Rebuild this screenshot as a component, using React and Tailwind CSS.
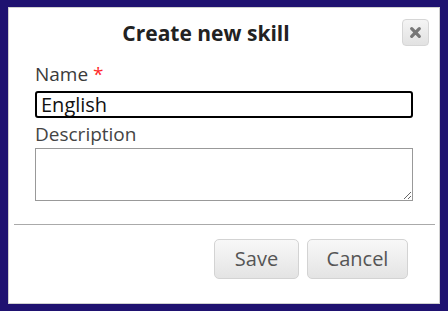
import React from "react";

export default function App() {
  return (
    <div className="w-[448px] h-[311px] bg-[#1f1270] pt-[7px] pl-[8px] pr-[8px] pb-[7px] font-['Open_Sans',sans-serif]">
      <div className="w-[432px] h-[297px] bg-white border border-[#d0d0d0] flex flex-col">
        {/* Header */}
        <div className="relative h-[54px] flex items-center justify-center pr-[36px]">
          <h2 className="text-[21px] font-bold text-[#222] mt-[-2px]">Create new skill</h2>
          <button className="absolute right-[10px] top-[11px] w-[27px] h-[27px] rounded-[4px] border border-[#d6d6d6] bg-gradient-to-b from-[#f4f4f4] to-[#e2e2e2] flex items-center justify-center">
            <svg width="13" height="13" viewBox="0 0 12 12">
              <path d="M2.5 2.5 L9.5 9.5 M9.5 2.5 L2.5 9.5" stroke="#777" strokeWidth="3" strokeLinecap="round" />
            </svg>
          </button>
        </div>

        {/* Form */}
        <div className="px-[26px] flex flex-col">
          <label className="text-[19px] leading-[24px] text-[#3a3a3a]">
            Name <span className="text-[#ff2a2a]">*</span>
          </label>
          <input
            type="text"
            defaultValue="English"
            className="mt-[5px] h-[27px] w-[378px] border-2 border-black rounded-[3px] px-[4px] text-[20px] leading-[23px] text-[#111] outline-none"
          />
          <label className="mt-[4px] text-[19px] leading-[24px] text-[#444]">Description</label>
          <textarea className="mt-[2px] h-[53px] w-[378px] border border-[#999] resize-y outline-none" />
        </div>

        <div className="mt-[23px] ml-[5px] mr-[4px] border-t border-[#aaa]" />

        {/* Footer */}
        <div className="flex justify-end gap-[8px] pr-[31px] mt-[14px]">
          <button className="w-[85px] h-[40px] rounded-[5px] border border-[#d3d3d3] bg-gradient-to-b from-[#f8f8f8] to-[#e4e4e4] text-[20px] text-[#555]">
            Save
          </button>
          <button className="w-[101px] h-[40px] rounded-[5px] border border-[#d3d3d3] bg-gradient-to-b from-[#f8f8f8] to-[#e4e4e4] text-[20px] text-[#555]">
            Cancel
          </button>
        </div>
      </div>
    </div>
  );
}
